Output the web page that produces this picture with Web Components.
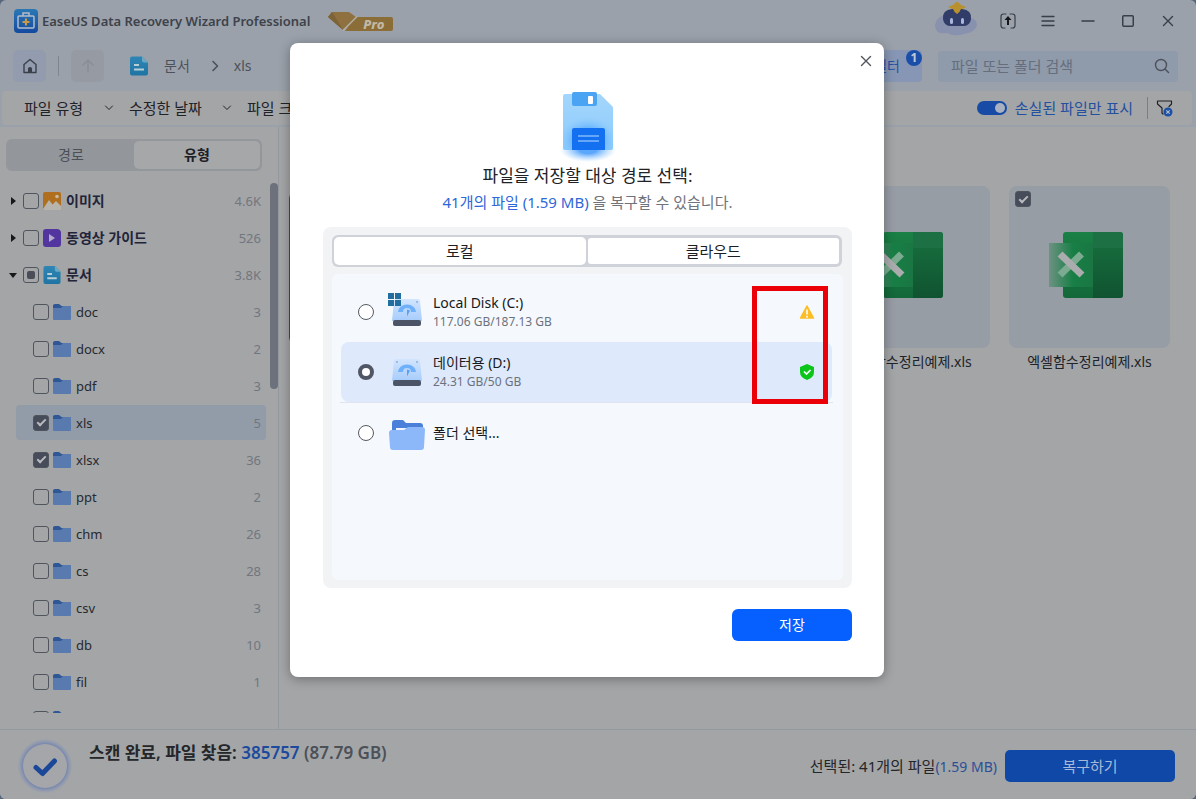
<!DOCTYPE html>
<html lang="ko">
<head>
<meta charset="utf-8">
<meta name="viewport" content="width=device-width, initial-scale=1">
<title>EaseUS Data Recovery Wizard Professional</title>
<style>
  body { margin: 0; background: #56677c; color: #202226; font: 14px/20px "Noto Sans", "Noto Sans CJK KR", sans-serif; }
</style>
</head>
<body>
<app-window></app-window>
<script>
const BASE = `
  *, *::before, *::after { box-sizing: border-box; }
  button, input, select { font: inherit; color: inherit; margin: 0; }
  button { border: 0; padding: 0; background: none; display: flex; align-items: center; justify-content: center; }
  a { color: inherit; text-decoration: none; }
  input[type=checkbox].tick { appearance: none; width: 16px; height: 16px; flex: none; border: 1px solid #50545c; border-radius: 3px; display: grid; place-items: center; }
  .tick:checked { background: #474c5b; border-color: #474c5b; }
  .tick:checked::after { content: ""; width: 9px; height: 5px; border: solid #b9bbbf; border-width: 0 0 2px 2px; transform: translateY(-1px) rotate(-45deg); }
  .tick:indeterminate::after { content: ""; width: 8px; height: 8px; border-radius: 2px; background: #4a4d58; }
`;
const define = (tag, html, setup) => {
  const tpl = document.createElement('template');
  tpl.innerHTML = html.replace('<style>', '<style>' + BASE);
  customElements.define(tag, class extends HTMLElement {
    connectedCallback() {
      if (this.shadowRoot) return;
      const root = this.attachShadow({ mode: 'open' });
      root.append(tpl.content.cloneNode(true));
      if (setup) setup(this, root);
    }
  });
};

const line = (d, w = 1.5) => `<path d="${d}" fill="none" stroke="currentColor" stroke-width="${w}" stroke-linecap="round" stroke-linejoin="round"/>`;
const disk = `
  <defs><linearGradient id="d" x1="0" y1="0" x2="0" y2="1"><stop stop-color="#d2e5ff"/><stop offset="1" stop-color="#a6ccfb"/></linearGradient></defs>
  <path d="M9 7h22q2 0 2 2l2 20H5L7 9q0-2 2-2z" fill="url(#d)"/>
  <path d="M11 20a9 7.500 0 0 1 18 0z" fill="#6fb0fa"/><path d="M16 20a4 4 0 0 1 8 0z" fill="#b9d8fd"/>
  <path d="M20 17.500l3 1-3 6z" fill="#5b9ff5"/>
  <circle cx="10" cy="10" r="1" fill="#8fb0d8"/><circle cx="30" cy="10" r="1" fill="#8fb0d8"/>
  <rect x="6" y="28" width="28" height="6" rx="2" fill="#4b5567"/>`;
const ICONS = {
  logo: ['0 0 24 24', `<defs><linearGradient id="l" x1="0" y1="0" x2="0" y2="1"><stop stop-color="#2a78b4"/><stop offset="1" stop-color="#134aa0"/></linearGradient></defs>
    <rect width="24" height="24" rx="4" fill="url(#l)"/><rect x="4" y="7" width="16" height="12" rx="1" fill="none" stroke="#b4bccb" stroke-width="1.500"/>
    <path d="M9 7V4h6v3" fill="none" stroke="#b4bccb" stroke-width="1.500"/><path d="M12 9.500v7M8.500 13h7" stroke="#c9994a" stroke-width="2.200"/>`],
  home: ['0 0 16 16', line('M2 6.500L8 1.500l6 5V14.500H2z', 1.4) + '<path d="M6 14V10.500q0-1.500 2-1.500t2 1.500V14z" fill="currentColor"/>'],
  up: ['0 0 16 16', line('M8 14V3M3 7l5-5 5 5')],
  doc: ['0 0 18 19', `<defs><linearGradient id="c" x1="0" y1="0" x2="0" y2="1"><stop stop-color="#2f86b4"/><stop offset="1" stop-color="#1f74a3"/></linearGradient></defs>
    <path d="M2 0h10l6 6v11q0 2-2 2H2q-2 0-2-2V2q0-2 2-2z" fill="url(#c)"/><path d="M12 0l6 6h-4q-2 0-2-2z" fill="#6aa9c4"/>
    <path d="M4 8.500h5M4 13h10" stroke="#b9cdd6" stroke-width="2"/>`],
  right: ['0 0 8 12', line('M2 1.500L6.500 6 2 10.500', 1.6)],
  down: ['0 0 10 6', line('M1.500 1l3.500 3.500L8.500 1', 1)],
  search: ['0 0 16 16', '<circle cx="7" cy="7" r="5.500" fill="none" stroke="currentColor" stroke-width="1.400"/>' + line('M11 11l3.500 3.500', 1.4)],
  upload: ['0 0 16 16', line('M6 1H3.500Q1 1 1 3.500v9Q1 15 3.500 15H5M10 1h2.500Q15 1 15 3.500v9q0 2.500-2.500 2.500H11', 1.2) + '<path d="M8 3l3.500 4H9v5H7V7H4.500z" fill="#15171a"/>'],
  menu: ['0 0 14 14', line('M1 2.500h12M1 7h12M1 11.500h12', 1.3)],
  min: ['0 0 14 14', line('M1 7h12')],
  max: ['0 0 14 14', '<rect x="1.750" y="1.750" width="10.500" height="10.500" rx="1" fill="none" stroke="currentColor" stroke-width="1.500"/>'],
  close: ['0 0 12 12', line('M1.500 1.500l9 9M10.500 1.500l-9 9', 1.4)],
  pro: ['0 0 66 20', `<path d="M26 6h37q2 0 2 2v10q0 2-2 2H17z" fill="#8b6d38"/><path d="M4 1h17l7 5-13 13L0 6z" fill="#8f713f"/><path d="M4 1l4 6 7 12L0 6z" fill="#7c6338"/><path d="M29 5.500L15 19.500" stroke="#b3aea3" stroke-width="1.500"/>`],
  mascot: ['0 0 44 34', `<path d="M8 14q-6 2-7 10 1 9 12 7 8 4 17 1 12-2 13-9 0-6-7-7z" fill="#8891ad"/>
    <path d="M9 17Q8 8 18 7h10q10 1 9 10-1 8-10 7h-8q-9 1-10-7z" fill="#313d68"/><path d="M14 5q4 2 5 2 1 3 4 5 3-2 4-5 3 0 5-2l-5-2-4-4-4 4z" fill="#b8902e"/>
    <rect x="16" y="16" width="3" height="6" rx="1.500" fill="#a9b6dc"/><rect x="27" y="16" width="3" height="6" rx="1.500" fill="#a9b6dc"/>`],
  funnel: ['0 0 18 18', line('M7 15l-1-1V9L1.500 5V2h14v3L13 7.500', 1.2) + '<circle cx="12" cy="13" r="4.500" fill="#1c4fa6"/><path d="M10.300 11.300l3.400 3.400M13.700 11.300l-3.400 3.400" stroke="#b5bccb" stroke-width="1.200"/>'],
  shut: ['0 0 8 8', '<path d="M2 0l5 4-5 4z" fill="#16181c"/>'],
  open: ['0 0 8 8', '<path d="M0 2h8L4 7z" fill="#16181c"/>'],
  image: ['0 0 18 18', '<rect width="18" height="18" rx="2" fill="#b06f1e"/><path d="M0 17l6-9 3.500 4.500L13 9l5 5v3q0 1-1 1H1z" fill="#b7b4ae"/><circle cx="14" cy="4.500" r="1.800" fill="#c9b9a0"/>'],
  video: ['0 0 18 18', '<path d="M3 0h11q3 0 4 3v12q0 3-3 3H3q-3 0-3-3V3q0-3 3-3z" fill="#5335a0"/><path d="M6 5l6 4-6 4z" fill="#b4aac9"/>'],
  folder: ['0 0 18 18', '<path d="M0 2.500Q0 1 2 1h4l2.500 2H18v8H0z" fill="#2f5795"/><path d="M0 5h8l2-2h8v13q0 1-1 1H1q-1 0-1-1z" fill="#587aaf"/>'],
  excel: ['0 0 74 66', `<defs><linearGradient id="g" x1="0" y1="0" x2="0" y2="1"><stop stop-color="#1a8045"/><stop offset="1" stop-color="#13683a"/></linearGradient><linearGradient id="h"><stop stop-color="#6d9283"/><stop offset=".55" stop-color="#177f45"/><stop offset="1" stop-color="#1a7643"/></linearGradient><linearGradient id="j" x1="0" y1="0" x2="0" y2="1"><stop stop-color="#166a3c"/><stop offset="1" stop-color="#105330"/></linearGradient></defs>
    <rect x="14" width="60" height="66" rx="3" fill="url(#g)"/><path d="M44 0h27q3 0 3 3v13H44z" fill="#1d6f44"/><path d="M44 16h30v47q0 3-3 3H44z" fill="url(#j)"/>
    <rect y="11" width="44" height="44" fill="url(#h)"/><path d="M32.500 22L11 43" stroke="#7bab90" stroke-width="7"/><path d="M11 22l22 21" stroke="#aaacae" stroke-width="7"/>`],
  floppy: ['0 0 70 76', `<defs><linearGradient id="f" x1="0" y1="0" x2="0" y2="1"><stop stop-color="#a4d6fc"/><stop offset="1" stop-color="#8bcbfc"/></linearGradient><radialGradient id="s"><stop offset=".3" stop-color="#3291fb" stop-opacity=".8"/><stop offset="1" stop-color="#7cc0ff" stop-opacity="0"/></radialGradient></defs>
    <ellipse cx="35" cy="62" rx="28" ry="12" fill="url(#s)"/>
    <path d="M12 6h35l13 13v41q0 2-2 2H12q-2 0-2-2V8q0-2 2-2z" fill="url(#f)"/><clipPath id="k"><path d="M10 6h37l13 13v43H10z"/></clipPath><ellipse cx="35" cy="52" rx="28" ry="23" fill="url(#s)" clip-path="url(#k)"/>
    <path d="M19 6q0-2 2-2h21q2 0 2 2v10q0 2-2 2H21q-2 0-2-2z" fill="#4ba3f4"/><rect x="35" y="8" width="5" height="8" rx="1" fill="#fff"/>
    <path d="M19 42q0-2 2-2h29q2 0 2 2v20H19z" fill="#1370f0"/><path d="M25 48h21M25 53h21" stroke="#b8dcff" stroke-width="1.200"/>`],
  disk: ['0 0 40 40', disk],
  osdisk: ['0 0 40 40', disk + '<path d="M1 1h6v6H1zM8 1h6v6H8zM1 8h6v6H1zM8 8h6v6H8z" fill="#226f9f"/>'],
  bigfolder: ['0 0 40 40', '<path d="M5 10q0-3 3-3h8l3 3h14q3 0 3 3v14H5z" fill="#4b80da"/><path d="M9 15h13v6H9z" fill="#eef5ff"/><path d="M2 20q0-3 3-3h12l4-3h14q3 0 3 3l-1 17q0 3-3 3H6q-3 0-3-3z" fill="#8cb8fa"/>'],
  warn: ['0 0 16 16', '<path d="M8 2l6.500 12h-13z" fill="#fcbd25" stroke="#fcbd25" stroke-width="1.500" stroke-linejoin="round"/><path d="M8 5.500v5M8 11.700v2" stroke="#fff" stroke-width="1.600"/>'],
  shield: ['0 0 16 16', '<path d="M8 0l7 3v5q0 5.500-7 8-7-2.500-7-8V3z" fill="#0cc51b"/><path d="M5 7.500l2.500 2.500 4-4" fill="none" stroke="#fff" stroke-width="1.700"/>'],
  done: ['0 0 54 54', `<defs><radialGradient id="r"><stop offset=".8" stop-color="#7183ae"/><stop offset="1" stop-color="#8f9ab4" stop-opacity=".2"/></radialGradient></defs>
    <circle cx="27" cy="27" r="27" fill="url(#r)"/><circle cx="27" cy="27" r="22" fill="#a4a6aa"/><path d="M18 28.500l6.500 6L36.500 22" fill="none" stroke="#1a4798" stroke-width="5" stroke-linecap="round" stroke-linejoin="round"/>`]
};
define('ui-icon', `<style>:host { display: block; flex: none; } svg { display: block; width: 100%; height: 100%; }</style>`, (el, root) => {
  const [box, body] = ICONS[el.getAttribute('name')];
  root.innerHTML += `<svg viewBox="${box}" aria-hidden="true">${body}</svg>`;
});

define('title-bar', `<style>
  :host { display: flex; align-items: center; height: 42px; padding: 0 8px 0 14px; color: #3a3e46; }
  h1 { margin: 0 18px 0 4px; font-size: 13px; font-weight: 600; line-height: 20px; white-space: nowrap; color: #3d424b; }
  .logo { width: 24px; height: 24px; }
  .pro { position: relative; color: #c0b9a8; font: italic 800 13px/14px "Noto Sans", sans-serif; }
  .pro ui-icon { width: 66px; height: 20px; }
  .pro span { position: absolute; right: 10px; bottom: 0; }
  .mascot { width: 44px; height: 34px; margin: 0 10px 4px auto; }
  button { width: 40px; height: 40px; }
  button ui-icon { width: 14px; height: 14px; }
  .upload ui-icon { width: 16px; height: 16px; }
  .close ui-icon { width: 12px; height: 12px; }
</style>
<ui-icon class="logo" name="logo"></ui-icon><h1>EaseUS Data Recovery Wizard Professional</h1>
<div class="pro"><ui-icon name="pro"></ui-icon><span>Pro</span></div>
<ui-icon class="mascot" name="mascot"></ui-icon>
<button class="upload" aria-label="업로드"><ui-icon name="upload"></ui-icon></button>
<button aria-label="메뉴"><ui-icon name="menu"></ui-icon></button>
<button aria-label="최소화"><ui-icon name="min"></ui-icon></button>
<button aria-label="최대화"><ui-icon name="max"></ui-icon></button>
<button class="close" aria-label="닫기"><ui-icon name="close"></ui-icon></button>`);

define('nav-bar', `<style>
  :host { display: flex; align-items: center; height: 48px; padding: 0 18px 0 13px; color: #4c515a; }
  .home, .up { width: 33px; height: 32px; border-radius: 5px; background: #929cae; color: #3a3f49; }
  .up { background: #969ba3; color: #888d96; }
  .home ui-icon { width: 16px; height: 16px; } .up ui-icon { width: 16px; height: 16px; }
  .rule { width: 1px; height: 20px; background: #80858e; margin: 0 12px; }
  nav { display: flex; align-items: center; margin-left: 26px; }
  nav .doc { width: 18px; height: 20px; margin-right: 16px; }
  nav .sep { width: 8px; height: 12px; margin: 0 15px 0 21px; }
  .filter { position: relative; margin: 0 16px 0 auto; width: 72px; height: 32px; border-radius: 4px; padding-right: 22px; justify-content: flex-end; background: #8796b4; color: #2451a3; }
  .filter b { position: absolute; right: 0; top: 0; width: 16px; height: 16px; border-radius: 8px; background: #1a4fa9; color: #c3cad8; font-size: 12px; line-height: 16px; text-align: center; }
  .search { display: flex; align-items: center; width: 240px; height: 31px; border-radius: 4px; padding: 0 8px 0 13px; background: #8f9aab; }
  input { flex: 1; min-width: 0; border: 0; padding: 0; background: none; outline: 0; font-size: 15px; }
  input::placeholder { color: #656e7c; opacity: 1; }
  .search ui-icon { width: 16px; height: 16px; }
</style>
<button class="home" aria-label="홈"><ui-icon name="home"></ui-icon></button><span class="rule"></span>
<button class="up" aria-label="위로"><ui-icon name="up"></ui-icon></button>
<nav><ui-icon class="doc" name="doc"></ui-icon><a href="#doc">문서</a><ui-icon class="sep" name="right"></ui-icon><a href="#xls">xls</a></nav>
<button class="filter">필터<b>1</b></button>
<label class="search"><input type="search" placeholder="파일 또는 폴더 검색" aria-label="검색"><ui-icon name="search"></ui-icon></label>`);

define('filter-bar', `<style>
  :host { display: flex; align-items: center; height: 34px; margin: 1px 4px 2px 2px; padding: 0 18px 0 22px; border-radius: 4px; background: #a3a5a7; color: #1f2227; font-size: 15px; }
  .drop { display: flex; align-items: center; gap: 20px; margin-right: 15px; }
  select { appearance: none; border: 0; padding: 0; background: none; }
  .drop ui-icon { width: 10px; height: 6px; }
  .toggle { display: flex; align-items: center; gap: 8px; margin-left: auto; color: #2450a0; }
  .toggle input { appearance: none; width: 30px; height: 14px; border-radius: 7px; background: #174ba5; display: flex; align-items: center; justify-content: flex-end; padding: 2px; }
  .toggle input::after { content: ""; width: 10px; height: 10px; border-radius: 5px; background: #a9b1c0; }
  .rule { width: 1px; height: 22px; background: #7b7f85; margin: 0 8px 0 14px; }
  button { width: 18px; height: 18px; } button ui-icon { width: 18px; height: 18px; }
</style>
<label class="drop"><select aria-label="파일 유형"><option>파일 유형</option></select><ui-icon name="down"></ui-icon></label>
<label class="drop"><select aria-label="수정한 날짜"><option>수정한 날짜</option></select><ui-icon name="down"></ui-icon></label>
<label class="drop"><select aria-label="파일 크기"><option>파일 크기</option></select></label>
<label class="toggle"><input type="checkbox" checked>손실된 파일만 표시</label><span class="rule"></span>
<button aria-label="필터 지우기"><ui-icon name="funnel"></ui-icon></button>`);

define('tree-row', `<style>
  :host { display: flex; align-items: center; flex: none; height: 35px; margin: 1px 0; padding: 0 5px 0 9px; font-size: 13px; border-radius: 4px; }
  :host([child]) { margin-left: 16px; padding-left: 17px; }
  :host([selected]) { background: #929ba8; }
  .arrow { width: 8px; height: 8px; margin-right: 6px; }
  :host([child]) .arrow { display: none; }
  label { display: flex; align-items: center; flex: 1; font-size: 14px; font-weight: 600; color: #22243a; }
  :host([child]) label { font-size: 13px; font-weight: 400; color: #26292f; }
  .kind { width: 18px; height: 18px; margin: 0 5px 0 4px; }
  .count { color: #72767e; }
</style>
<ui-icon class="arrow" name="shut"></ui-icon><label><input class="tick" type="checkbox"><ui-icon class="kind" name="folder"></ui-icon><slot></slot></label><span class="count"></span>`, (el, root) => {
  root.querySelector('.count').textContent = el.getAttribute('count');
  const box = root.querySelector('input');
  box.checked = el.getAttribute('state') === 'on';
  box.indeterminate = el.getAttribute('state') === 'some';
  const swap = (sel, name) => { const n = document.createElement('ui-icon'); n.className = root.querySelector(sel).className; n.setAttribute('name', name); root.querySelector(sel).replaceWith(n); };
  swap('.kind', el.getAttribute('icon') || 'folder');
  if (el.hasAttribute('open')) swap('.arrow', 'open');
});

define('side-bar', `<style>
  :host { display: flex; flex-direction: column; width: 279px; flex: none; border-right: 1px solid #94989f; padding: 12px 0 16px; min-height: 0; }
  .tabs { display: flex; margin: 0 16px 11px 6px; height: 32px; padding: 2px; border-radius: 6px; background: #93969b; }
  .tabs button { flex: 1; border-radius: 5px; color: #4b4f57; }
  .tabs [aria-selected=true] { background: #a5a7a9; color: #1d2026; font-weight: 600; }
  .scroll { display: flex; flex: 1; min-height: 0; overflow: hidden; }
  .tree { flex: 1; display: flex; flex-direction: column; }
  .thumb { width: 8px; height: 206px; margin: 1px 0 0 4px; border-radius: 4px; background: #6c717b; }
</style>
<div class="tabs" role="tablist"><button role="tab" aria-selected="false">경로</button><button role="tab" aria-selected="true">유형</button></div>
<div class="scroll"><div class="tree">
<tree-row icon="image" count="4.6K">이미지</tree-row>
<tree-row icon="video" count="526">동영상 가이드</tree-row>
<tree-row icon="doc" count="3.8K" state="some" open>문서</tree-row>
<tree-row child count="3">doc</tree-row>
<tree-row child count="2">docx</tree-row>
<tree-row child count="3">pdf</tree-row>
<tree-row child count="5" state="on" selected>xls</tree-row>
<tree-row child count="36" state="on">xlsx</tree-row>
<tree-row child count="2">ppt</tree-row>
<tree-row child count="26">chm</tree-row>
<tree-row child count="28">cs</tree-row>
<tree-row child count="3">csv</tree-row>
<tree-row child count="10">db</tree-row>
<tree-row child count="1">fil</tree-row>
<tree-row child></tree-row>
</div><div class="thumb"></div></div>`, null);

define('file-card', `<style>
  :host { display: block; font-size: 14px; text-align: center; white-space: nowrap; }
  .tile { position: relative; display: grid; place-items: center; height: 162px; border-radius: 8px; background: #979da5; }
  .tile ui-icon { width: 74px; height: 66px; margin: 0 7px 4px 0; }
  .tick { position: absolute; left: 6px; top: 5px; }
  label { display: block; margin-top: 4px; line-height: 20px; color: #202329; }
  :host([active]) .tile { background: #1c4fa6; margin-top: 5px; height: 154px; }
  :host([active]) .tile > *, :host([active]) label { display: none; }
</style>
<div class="tile"><ui-icon name="excel"></ui-icon><input class="tick" type="checkbox" id="pick" checked></div><label for="pick"><slot></slot></label>`);

define('file-grid', `<style>
  :host { flex: 1; display: grid; grid-template-columns: repeat(auto-fill, 161px); gap: 19px; align-content: start; padding: 59px 0 0 10px; min-width: 0; }
  ::slotted(:nth-child(2)) { grid-column: 4; }
</style><slot></slot>`);

define('status-bar', `<style>
  :host { display: flex; align-items: center; height: 70px; padding: 0 21px 0 18px; border-top: 1px solid #94989f; color: #24262a; }
  .done { width: 54px; height: 54px; margin: 3px 17px 0 0; }
  p { margin: 0; white-space: nowrap; }
  .found { align-self: flex-start; margin-top: 13px; font-size: 17px; font-weight: 600; line-height: 20px; }
  .found b { font-weight: 600; color: #1c4a9e; } .found span { color: #4c5057; }
  .picked { margin-left: auto; padding-top: 3px; font-size: 15px; } .picked span { color: #2c4f97; font-size: 14px; }
  button { width: 170px; height: 32px; margin: 3px 0 0 8px; border-radius: 5px; background: #0f48a6; color: #a9b9d8; font-size: 15px; }
</style>
<ui-icon class="done" name="done"></ui-icon>
<p class="found">스캔 완료, 파일 찾음: <b>385757</b> <span>(87.79 GB)</span></p>
<p class="picked">선택된: 41개의 파일<span>(1.59 MB)</span></p><button>복구하기</button>`);

define('disk-option', `<style>
  :host { display: flex; align-items: center; height: 60px; margin: 0 11px 0 9px; padding: 0 17px; border-radius: 8px; }
  :host([selected]) { background: #dee9fb; }
  .body { flex: 1; margin-left: 6px; }
  ::slotted(label) { display: block; font-size: 14px; line-height: 20px; color: #17191d; }
  ::slotted(small) { display: block; font-size: 12px; line-height: 18px; color: #6c727c; }
</style><slot name="radio"></slot><slot name="icon"></slot><div class="body"><slot></slot></div><slot name="status"></slot>`);

define('save-dialog', `<style>
  :host { display: flex; flex-direction: column; width: 594px; padding: 45px 32px 36px 33px; border-radius: 8px; background: #fff; box-shadow: 0 2px 12px #0005; color: #202226; }
  .close { position: absolute; right: 8px; top: 8px; width: 20px; height: 20px; color: #50545c; } .close ui-icon { width: 12px; height: 12px; }
  .floppy { width: 70px; height: 76px; align-self: center; }
  h2 { margin: 0; font-size: 17px; font-weight: 400; line-height: 24px; text-align: center; }
  .sum { margin: 3px 0 14px; font-size: 15px; line-height: 22px; text-align: center; color: #6e737c; } .sum span { color: #2e68d8; }
  .panel { position: relative; padding: 8px 9px; border-radius: 8px; background: #f2f3f4; }
  .tabs { display: flex; gap: 2px; height: 32px; padding: 2px; margin-right: 1px; border-radius: 6px; background: #cfd3d9; font-size: 15px; }
  .tabs button { flex: 1; border-radius: 5px; background: #fff; color: #1c1e22; }
  .tabs [aria-selected=false] { margin: 1px 1px 1px 0; border-radius: 3px; }
  .list { margin-top: 7px; height: 306px; padding-top: 8px; border-radius: 6px; background: #f5f9fe; }
  hr { border: 0; margin: 0 10px 0 8px; height: 1px; background: #e0e4ec; }
  input { appearance: none; width: 16px; height: 16px; flex: none; border: 1px solid #555a62; border-radius: 8px; background: #fff; margin-right: 13px; }
  input:checked { border: 4px solid #505663; }
  .big { width: 40px; height: 40px; } .st { width: 16px; height: 16px; }
  .mark { position: absolute; right: 24px; top: 59px; width: 76px; height: 118px; border: 5px solid #eb0008; pointer-events: none; }
  .save { align-self: flex-end; width: 120px; height: 32px; margin-top: 21px; border-radius: 6px; background: #0560ff; color: #fff; }
</style>
<button class="close" aria-label="닫기"><ui-icon name="close"></ui-icon></button>
<ui-icon class="floppy" name="floppy"></ui-icon>
<h2>파일을 저장할 대상 경로 선택:</h2>
<p class="sum"><span>41개의 파일 (1.59 MB)</span> 을 복구할 수 있습니다.</p>
<div class="panel">
  <div class="tabs" role="tablist"><button role="tab" aria-selected="true">로컬</button><button role="tab" aria-selected="false">클라우드</button></div>
  <div class="list">
    <disk-option><input slot="radio" type="radio" name="dest" id="c"><ui-icon slot="icon" class="big" name="osdisk"></ui-icon><label for="c">Local Disk (C:)</label><small>117.06 GB/187.13 GB</small><ui-icon slot="status" class="st" name="warn"></ui-icon></disk-option>
    <disk-option selected><input slot="radio" type="radio" name="dest" id="d" checked><ui-icon slot="icon" class="big" name="disk"></ui-icon><label for="d">데이터용 (D:)</label><small>24.31 GB/50 GB</small><ui-icon slot="status" class="st" name="shield"></ui-icon></disk-option>
    <hr>
    <disk-option><input slot="radio" type="radio" name="dest" id="f"><ui-icon slot="icon" class="big" name="bigfolder"></ui-icon><label for="f">폴더 선택...</label></disk-option>
  </div>
  <div class="mark"></div>
</div>
<button class="save">저장</button>`);

define('app-window', `<style>
  :host { display: flex; flex-direction: column; height: 100vh; position: relative; border-radius: 6px; overflow: hidden; background: #9aa1aa; }
  main { display: flex; flex: 1; min-height: 0; background: #a3a5a7; }
  status-bar { background: #a3a5a7; }
  save-dialog { position: absolute; top: 43px; left: calc(50% - 308px); }
</style>
<title-bar></title-bar><nav-bar></nav-bar><filter-bar></filter-bar>
<main><side-bar></side-bar>
<file-grid><file-card active></file-card><file-card>엑셀함수정리예제.xls</file-card><file-card>엑셀함수정리예제.xls</file-card></file-grid></main>
<status-bar></status-bar>
<save-dialog role="dialog" aria-label="저장 경로"></save-dialog>`);
</script>
</body>
</html>
